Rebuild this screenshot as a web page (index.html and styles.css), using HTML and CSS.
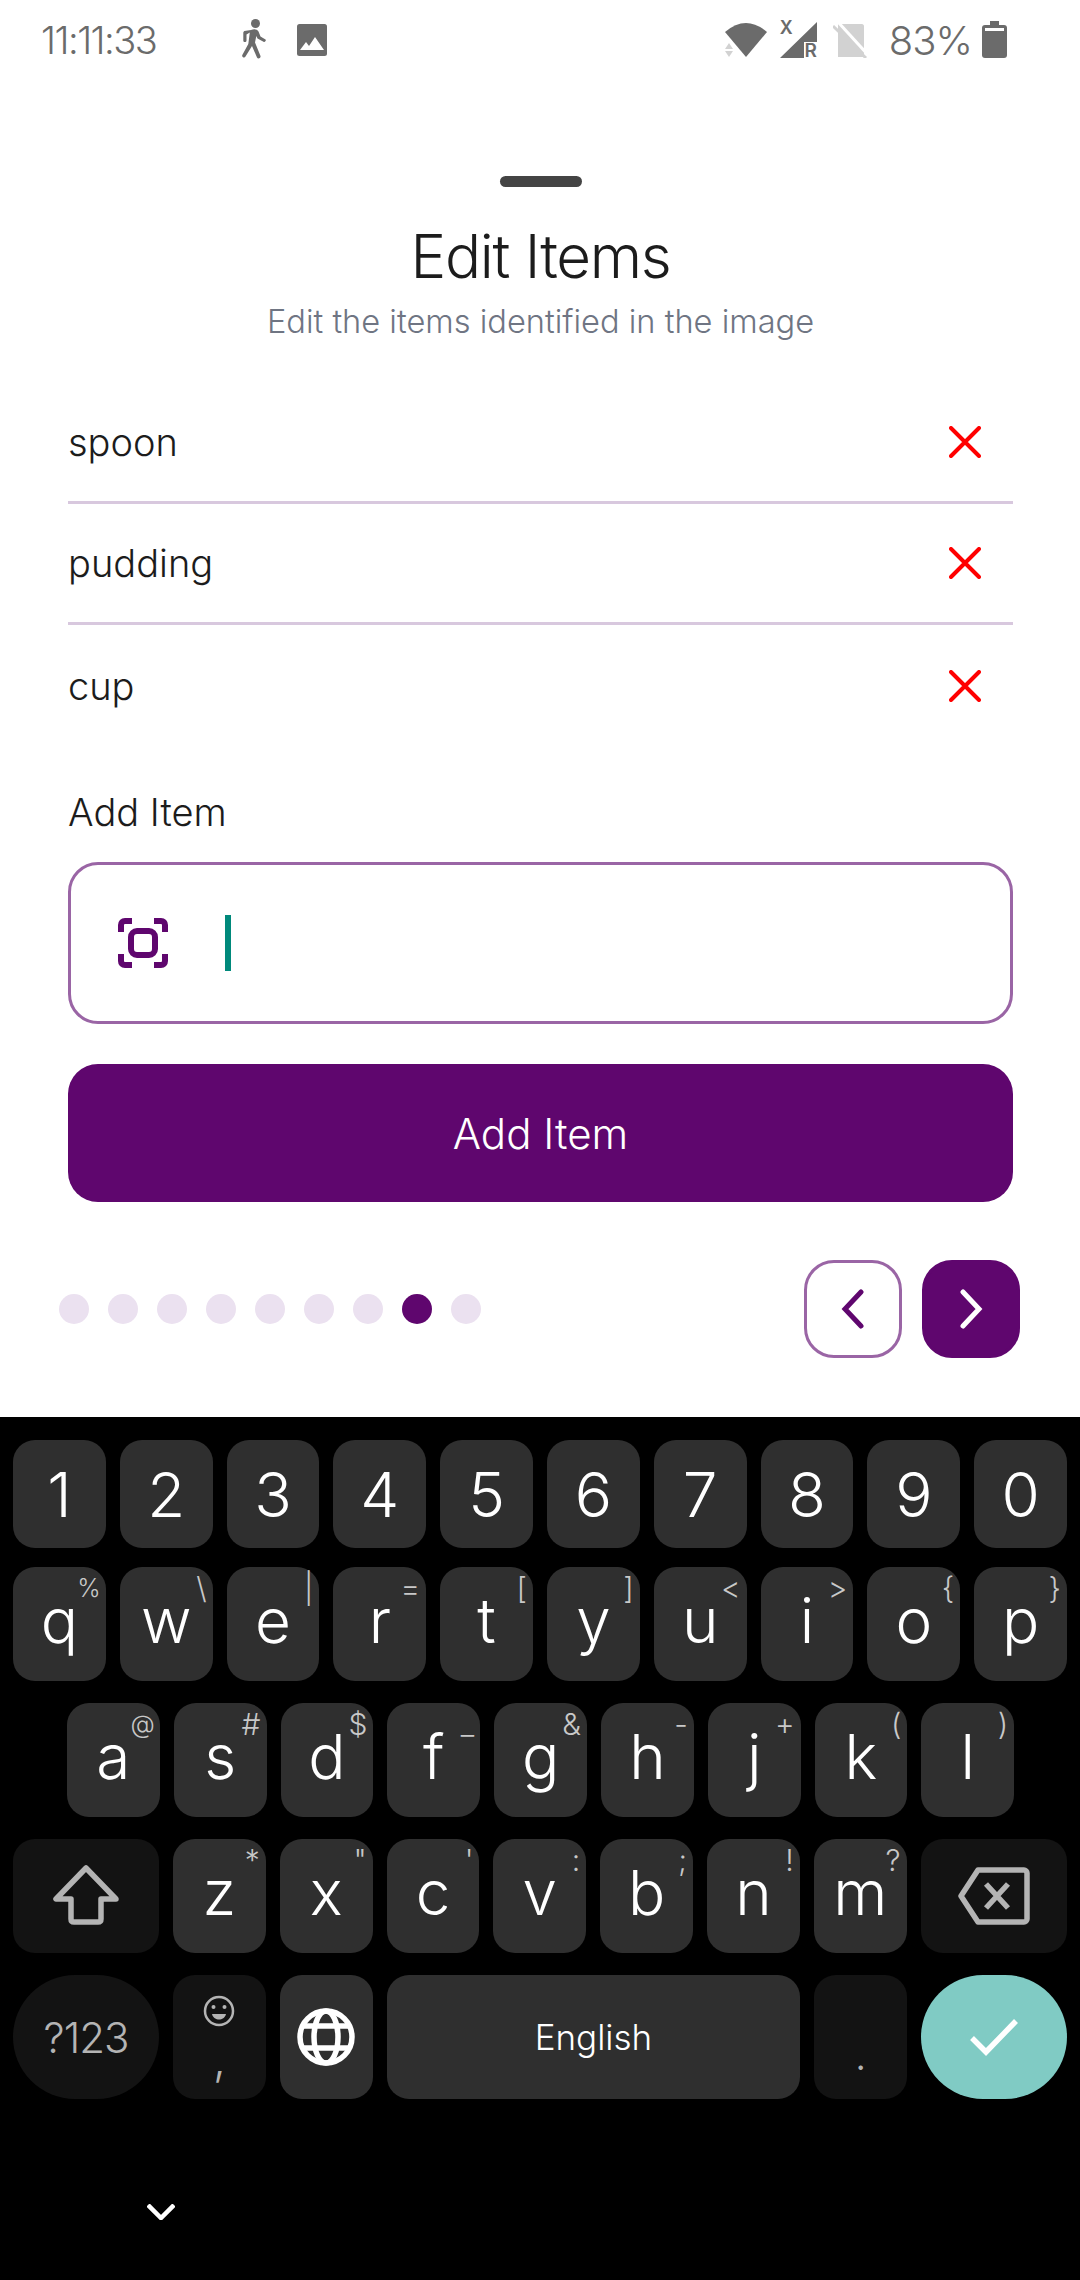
FILE: index.html
```html
<!DOCTYPE html>
<html lang="en">
<head>
  <meta charset="UTF-8" />
  <meta name="viewport" content="width=device-width, initial-scale=1.0"/>
  <title>Edit Items</title>
  <link rel="stylesheet" href="styles.css">
</head>
<body>

<div class="status-bar">
  <span class="clock">11:11:33</span>
  <svg class="icon-walk" viewBox="0 0 26 42"><circle cx="14.5" cy="4.5" r="4.5"/><path d="M10 11c3-1.500 6-1 7.500 1.500l2 5 5 3c1 1-.5 3-2 2.200l-6-3.200-1.200-2.500-1.300 6.500 5.500 13.500c.5 2-2.500 3.500-3.500 1.500l-5-11.500-6.500 10.500c-1 2-4 .5-3.200-1.500l6-11 1.500-11.500-3.300 2v6c0 2-3.200 2-3.200 0v-7.500c0-1 .5-1.500 1-2z"/></svg>
  <svg class="icon-image" viewBox="0 0 30 32"><rect width="30" height="32" rx="2.5"/><path fill="#fff" d="M3 26l6-8 3 4 6-9 9 13z"/></svg>
  <span class="spacer"></span>
  <svg class="icon-wifi" viewBox="0 0 42 35"><path d="M0 9Q21-9 42 9L21 34z"/><path fill="#d2d2d2" d="M4 20l4 6H0zM0 28h8l-4 6z"/></svg>
  <span class="signal">
    <svg class="icon-signal" viewBox="0 0 37 36"><path d="M37 0v20H24v16H0z"/></svg>
    <span class="sig-x">X</span>
    <span class="sig-r">R</span>
  </span>
  <svg class="icon-sim" viewBox="0 0 34 34"><path fill="#d2d2d2" d="M5 0h24c1 0 2 1 2 2v31H5z"/><path d="M5-2l31 34" stroke="#fff" stroke-width="3"/><path d="M0 2l33 32" stroke="#d2d2d2" stroke-width="3"/></svg>
  <span class="battery-pct">83%</span>
  <span class="battery"><span class="battery-cap"></span><span class="battery-line"></span></span>
</div>

<main class="sheet">
  <div class="handle"></div>
  <h1 class="title">Edit Items</h1>
  <p class="subtitle">Edit the items identified in the image</p>

  <ul class="items">
    <li class="item"><span>spoon</span><svg class="remove" viewBox="0 0 32 32"><path d="M2 2l28 28M30 2L2 30"/></svg></li>
    <li class="item"><span>pudding</span><svg class="remove" viewBox="0 0 32 32"><path d="M2 2l28 28M30 2L2 30"/></svg></li>
    <li class="item"><span>cup</span><svg class="remove" viewBox="0 0 32 32"><path d="M2 2l28 28M30 2L2 30"/></svg></li>
  </ul>

  <label class="add-label">Add Item</label>
  <div class="add-input">
    <svg class="icon-scan" viewBox="0 0 52 52"><path d="M4 15V8c0-2.500 1.500-4 4-4h7M37 4h7c2.500 0 4 1.500 4 4v7M48 37v7c0 2.500-1.500 4-4 4h-7M15 48H8c-2.500 0-4-1.500-4-4v-7"/><rect x="14" y="14" width="24" height="24" rx="6"/></svg>
    <span class="caret"></span>
  </div>
  <button class="add-btn">Add Item</button>

  <div class="pager">
    <div class="dots">
      <span class="dot"></span><span class="dot"></span><span class="dot"></span>
      <span class="dot"></span><span class="dot"></span><span class="dot"></span>
      <span class="dot"></span><span class="dot active"></span><span class="dot"></span>
    </div>
    <button class="nav-btn back"><svg viewBox="0 0 24 40"><path d="M20 3L4 20l16 17"/></svg></button>
    <button class="nav-btn next"><svg viewBox="0 0 24 40"><path d="M4 3l16 17L4 37"/></svg></button>
  </div>
</main>

<div class="keyboard">
  <div class="kb-row row-num">
    <div class="key">1</div><div class="key">2</div><div class="key">3</div><div class="key">4</div><div class="key">5</div>
    <div class="key">6</div><div class="key">7</div><div class="key">8</div><div class="key">9</div><div class="key">0</div>
  </div>
  <div class="kb-row row-top letters">
    <div class="key">q<sup class="sup-wide">%</sup></div><div class="key">w<sup>\</sup></div><div class="key">e<sup>|</sup></div><div class="key">r<sup>=</sup></div><div class="key">t<sup>[</sup></div>
    <div class="key">y<sup>]</sup></div><div class="key">u<sup>&lt;</sup></div><div class="key">i<sup>&gt;</sup></div><div class="key">o<sup>{</sup></div><div class="key">p<sup>}</sup></div>
  </div>
  <div class="kb-row row-mid letters">
    <div class="key">a<sup class="sup-wide">@</sup></div><div class="key">s<sup>#</sup></div><div class="key">d<sup>$</sup></div><div class="key">f<sup>_</sup></div><div class="key">g<sup>&amp;</sup></div>
    <div class="key">h<sup>-</sup></div><div class="key">j<sup>+</sup></div><div class="key">k<sup>(</sup></div><div class="key">l<sup>)</sup></div>
  </div>
  <div class="kb-row row-low letters">
    <div class="key wide dark">
      <svg class="icon-shift" viewBox="0 0 66 62"><path d="M33 3L3 34h15v20c0 2 1 3 3 3h24c2 0 3-1 3-3V34h15z"/></svg>
    </div>
    <div class="key">z<sup>*</sup></div><div class="key">x<sup>"</sup></div><div class="key">c<sup>'</sup></div><div class="key">v<sup>:</sup></div>
    <div class="key">b<sup>;</sup></div><div class="key">n<sup>!</sup></div><div class="key">m<sup>?</sup></div>
    <div class="key wide dark">
      <svg class="icon-del" viewBox="0 0 72 60"><path d="M20 4h46c1.500 0 3 1.500 3 3v46c0 1.500-1.500 3-3 3H20L3 30z"/><path d="M28 18l22 24M50 18L28 42"/></svg>
    </div>
  </div>
  <div class="kb-row row-bottom">
    <div class="key wide dark pill sym">?123</div>
    <div class="key dark comma">
      <svg class="icon-smile" viewBox="0 0 32 32"><circle cx="16" cy="16" r="14"/><circle class="fill" cx="10.5" cy="12" r="2"/><circle class="fill" cx="21.5" cy="12" r="2"/><path class="fill" d="M9 19h14c-1 4-4 5.500-7 5.500s-6-1.500-7-5.500z"/></svg>
      <span>,</span>
    </div>
    <div class="key">
      <svg class="icon-globe" viewBox="0 0 58 58"><circle cx="29" cy="29" r="26"/><ellipse cx="29" cy="29" rx="12" ry="26"/><path d="M6 18h46M6 40h46"/></svg>
    </div>
    <div class="key space">English</div>
    <div class="key dark period"><span>.</span></div>
    <div class="key wide pill enter">
      <svg class="icon-check" viewBox="0 0 50 40"><path d="M3 21l14 14L47 4"/></svg>
    </div>
  </div>
  <div class="kb-nav">
    <svg class="icon-hide" viewBox="0 0 28 16"><path d="M1 1l13 13L27 1"/></svg>
  </div>
</div>

</body>
</html>
```

FILE: styles.css
```css
* {
  box-sizing: border-box;
}

html, body {
  margin: 0;
  height: 2280px;
}

body {
  width: 1080px;
  background: #fff;
  font-family: Inter, 'Liberation Sans', sans-serif;
  font-weight: 300;
  color: #1c1c1c;
  overflow: hidden;
}

/* status bar */
.status-bar {
  height: 80px;
  padding: 0 73px 0 41px;
  display: flex;
  align-items: center;
  color: #6b6b6b;
}

.status-bar svg {
  fill: #6b6b6b;
  flex: none;
}

.clock {
  font-size: 38px;
  letter-spacing: -1.5px;
  width: 200px;
}

.icon-walk {
  width: 26px;
  height: 42px;
  margin-right: 30px;
}

.icon-image {
  width: 30px;
  height: 32px;
}

.spacer {
  flex: 1;
}

.icon-wifi {
  width: 42px;
  height: 35px;
  margin-right: 13px;
}

.signal {
  width: 37px;
  height: 36px;
  position: relative;
}

.icon-signal {
  display: block;
  width: 37px;
  height: 36px;
}

.sig-x, .sig-r {
  position: absolute;
  font-weight: 600;
  line-height: 1;
}

.sig-x {
  left: 0;
  top: -3px;
  font-size: 18px;
}

.sig-r {
  right: 0;
  bottom: -2px;
  font-size: 19px;
}

.icon-sim {
  width: 34px;
  height: 34px;
  margin: 2px 22px 0 16px;
}

.battery-pct {
  font-size: 40px;
  letter-spacing: -1px;
  margin-right: 10px;
}

.battery {
  width: 25px;
  height: 33px;
  margin-top: 3px;
  background: #6b6b6b;
  border-radius: 3px;
  position: relative;
}

.battery-cap {
  position: absolute;
  left: 8px;
  top: -4px;
  width: 9px;
  height: 4px;
  background: #6b6b6b;
}

.battery-line {
  position: absolute;
  left: 3px;
  top: 3px;
  width: 19px;
  height: 3px;
  background: #fff;
}

/* sheet */
.sheet {
  height: 1337px;
  padding: 96px 67px 0 68px;
}

.handle {
  width: 82px;
  height: 11px;
  margin: 0 auto;
  background: #444;
  border-radius: 6px;
}

.title {
  margin: 33px 0 0;
  text-align: center;
  font-size: 60px;
  line-height: 72px;
  font-weight: 300;
  letter-spacing: -1.3px;
}

.subtitle {
  margin: 8px 0 0;
  text-align: center;
  font-size: 32.6px;
  line-height: 42px;
  color: #6f7583;
}

.items {
  list-style: none;
  margin: 41px 0 0;
  padding: 0;
}

.item {
  height: 121px;
  display: flex;
  align-items: center;
  justify-content: space-between;
  padding-right: 32px;
  font-size: 38px;
  border-bottom: 3px solid #d8c8de;
}

.item:last-child {
  border-bottom: none;
}

.remove {
  width: 32px;
  height: 32px;
  fill: none;
  stroke: #f00;
  stroke-width: 4;
  stroke-linecap: round;
}

.add-label {
  display: block;
  margin-top: 43px;
  font-size: 38px;
  line-height: 46px;
}

.add-input {
  height: 162px;
  margin-top: 27px;
  padding-left: 46px;
  display: flex;
  align-items: center;
  gap: 56px;
  border: 3px solid #9a65a5;
  border-radius: 30px;
}

.icon-scan {
  width: 52px;
  height: 52px;
  fill: none;
  stroke: #5f066e;
  stroke-width: 6;
}

.caret {
  width: 6px;
  height: 56px;
  background: #00897b;
}

.add-btn {
  display: block;
  width: 100%;
  height: 138px;
  margin-top: 40px;
  border: none;
  border-radius: 30px;
  background: #5f066e;
  color: #fff;
  font-family: inherit;
  font-weight: 300;
  font-size: 42px;
}

.pager {
  margin: 58px -7px 0 -9px;
  display: flex;
  align-items: center;
}

.dots {
  flex: 1;
  display: flex;
  gap: 19px;
}

.dot {
  width: 30px;
  height: 30px;
  border-radius: 50%;
  background: #ebe1f0;
}

.dot.active {
  background: #5f066e;
}

.nav-btn {
  width: 98px;
  height: 98px;
  padding: 0;
  display: flex;
  align-items: center;
  justify-content: center;
  border-radius: 30px;
  border: 3px solid #9a65a5;
  background: #fff;
}

.nav-btn svg {
  width: 24px;
  height: 40px;
  fill: none;
  stroke: #5f066e;
  stroke-width: 5;
  stroke-linecap: round;
}

.nav-btn.next {
  margin-left: 20px;
  background: #5f066e;
  border-color: #5f066e;
}

.nav-btn.next svg {
  stroke: #fff;
}

/* keyboard */
.keyboard {
  height: 863px;
  padding: 23px 13px 0;
  background: #000;
}

.kb-row {
  display: flex;
  gap: 14px;
  margin-bottom: 22px;
}

.row-num {
  height: 108px;
  margin-bottom: 19px;
}

.row-top, .row-mid, .row-low {
  height: 114px;
}

.row-mid {
  padding-left: 54px;
}

.row-bottom {
  height: 124px;
}

.key {
  flex: none;
  width: 92.8px;
  height: 100%;
  position: relative;
  display: flex;
  align-items: center;
  justify-content: center;
  background: #2f2f2f;
  border-radius: 22px;
  color: #fff;
  font-size: 62px;
}

.letters .key {
  padding-bottom: 7px;
}

.letters .key.dark {
  padding-bottom: 0;
}

.key sup {
  position: absolute;
  right: 6px;
  top: 5px;
  font-size: 30px;
  line-height: 32px;
  color: #c8c8c8;
  vertical-align: baseline;
}

.key sup.sup-wide {
  right: 5px;
  font-size: 25px;
}

.key.wide {
  width: 146px;
}

.key.dark {
  background: #131313;
}

.key.pill {
  border-radius: 62px;
}

.sym {
  font-size: 42px;
  letter-spacing: -1px;
  color: #b4b4b4;
}

.comma {
  flex-direction: column;
  justify-content: flex-start;
  padding-top: 20px;
  font-size: 46px;
  color: #b4b4b4;
}

.comma span {
  line-height: 46px;
  margin-top: 8px;
}

.space {
  width: 413.6px;
  font-size: 35px;
}

.period {
  align-items: flex-end;
  font-size: 42px;
  color: #b4b4b4;
}

.period span {
  line-height: 44px;
  margin-bottom: 22px;
}

.enter {
  background: #80cbc4;
}

.icon-shift {
  width: 66px;
  height: 62px;
  fill: none;
  stroke: #b4b4b4;
  stroke-width: 5.5;
  stroke-linejoin: round;
}

.icon-del {
  width: 72px;
  height: 60px;
  fill: none;
  stroke: #b4b4b4;
  stroke-width: 5.5;
  stroke-linejoin: round;
}

.icon-smile {
  width: 32px;
  height: 32px;
  fill: none;
  stroke: #b4b4b4;
  stroke-width: 2.5;
}

.icon-smile .fill {
  fill: #b4b4b4;
  stroke: none;
}

.icon-globe {
  width: 58px;
  height: 58px;
  fill: none;
  stroke: #fff;
  stroke-width: 5.5;
}

.icon-check {
  width: 50px;
  height: 40px;
  fill: none;
  stroke: #fff;
  stroke-width: 5.5;
}

.kb-nav {
  margin-top: 105px;
  padding-left: 134px;
}

.icon-hide {
  display: block;
  width: 28px;
  height: 16px;
  fill: none;
  stroke: #fff;
  stroke-width: 4.5;
}
```
